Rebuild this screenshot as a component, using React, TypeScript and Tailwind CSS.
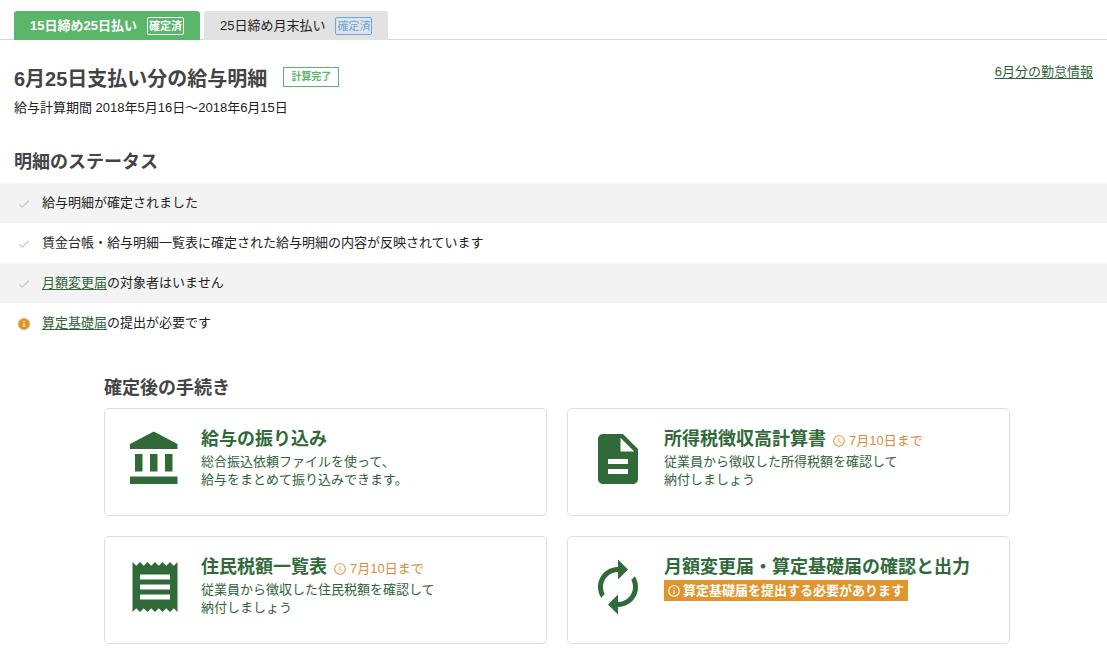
import type { ReactNode } from "react";
import clsx from "clsx";
import { MdCheck, MdInfo } from "react-icons/md";

function Icon({ d, className }: { d: string; className: string }) {
    return (
        <svg viewBox="0 0 24 24" fill="currentColor" aria-hidden="true" className={clsx("shrink-0", className)}>
            <path d={d} />
        </svg>
    );
}

const icons = {
    bank: "M4 10v7h3v-7H4zm6 0v7h3v-7h-3zM2 22h19v-3H2v3zm14-12v7h3v-7h-3zm-4.500-9L2 6v2h19V6l-9.500-5z",
    document:
        "M14 2H6c-1.100 0-1.990.900-1.990 2L4 20c0 1.100.890 2 1.990 2H18c1.100 0 2-.900 2-2V8l-6-6zm2 16H8v-2h8v2zm0-4H8v-2h8v2zm-3-5V3.500L18.500 9H13z",
    receipt:
        "M18 17H6v-2h12v2zm0-4H6v-2h12v2zm0-4H6V7h12v2zM3 22l1.500-1.500L6 22l1.500-1.500L9 22l1.500-1.500L12 22l1.500-1.500L15 22l1.500-1.500L18 22l1.500-1.500L21 22V2l-1.500 1.500L18 2l-1.500 1.500L15 2l-1.500 1.500L12 2l-1.500 1.500L9 2 7.500 3.500 6 2 4.500 3.500 3 2v20z",
    renew: "M12 6v3l4-4-4-4v3c-4.420 0-8 3.580-8 8 0 1.570.460 3.030 1.240 4.260L6.700 14.800c-.450-.830-.700-1.790-.700-2.800 0-3.310 2.690-6 6-6zm6.760 1.740L17.300 9.200c.440.840.700 1.790.700 2.800 0 3.310-2.690 6-6 6v-3l-4 4 4 4v-3c4.420 0 8-3.580 8-8 0-1.570-.460-3.030-1.240-4.260z",
    clock: "M11.990 2C6.470 2 2 6.480 2 12s4.470 10 9.990 10C17.520 22 22 17.520 22 12S17.520 2 11.990 2zM12 20c-4.420 0-8-3.580-8-8s3.580-8 8-8 8 3.580 8 8-3.580 8-8 8zm.500-13H11v6l5.250 3.150.750-1.230-4.500-2.670z",
    info: "M11 17h2v-6h-2v6zm1-15C6.480 2 2 6.480 2 12s4.480 10 10 10 10-4.480 10-10S17.520 2 12 2zm0 18c-4.410 0-8-3.590-8-8s3.590-8 8-8 8 3.590 8 8-3.590 8-8 8zM11 9h2V7h-2v2z",
};

const tabs = [
    { label: "15日締め25日払い", active: true },
    { label: "25日締め月末払い", active: false },
];

function StatusRow({ warning, children }: { warning?: boolean; children: ReactNode }) {
    return (
        <li className="flex min-h-10 items-center gap-[11px] px-[17px] odd:bg-[#f3f3f3]">
            {warning ? (
                <MdInfo className="mt-0.5 size-3.5 shrink-0 text-[#e0962e]" />
            ) : (
                <MdCheck className="mt-0.5 size-3.5 shrink-0 text-[#c4c4c4]" />
            )}
            <p>{children}</p>
        </li>
    );
}

function TextLink({ children }: { children: ReactNode }) {
    return (
        <a href="#" className="text-[#2f6339] underline underline-offset-2">
            {children}
        </a>
    );
}

type CardProps = {
    icon: string;
    title: string;
    due?: string;
    children: ReactNode;
};

function ProcedureCard({ icon, title, due, children }: CardProps) {
    return (
        <a
            href="#"
            className="flex min-h-[108px] gap-4 rounded-[5px] border border-[#dedede] p-5 text-[#2f6339] hover:bg-[#fafafa]"
        >
            <Icon d={icon} className="size-[60px] text-[#306a38]" />
            <div>
                <div className="flex items-center gap-1.5">
                    <h3 className="text-lg leading-5 font-bold text-[#306a38]">{title}</h3>
                    {due && (
                        <span className="flex items-center gap-[3px] pt-1 leading-[14px] text-[#db8b3f]">
                            <Icon d={icons.clock} className="size-3.5 text-[#e0a04a]" />
                            {due}
                        </span>
                    )}
                </div>
                {children}
            </div>
        </a>
    );
}

export default function App() {
    return (
        <div className="bg-white pb-5 font-['Liberation_Sans','Noto_Sans_CJK_JP',sans-serif] text-[13px] leading-[18px] text-[#222]">
            <div role="tablist" className="flex gap-1 border-b border-[#d8d8d8] px-3.5 pt-[11px]">
                {tabs.map((tab) => (
                    <button
                        key={tab.label}
                        type="button"
                        role="tab"
                        aria-selected={tab.active}
                        className={clsx(
                            "-mb-px flex h-[29px] items-center gap-2.5 rounded-t-[3px] px-4",
                            tab.active ? "bg-[#5ab66b] font-bold text-white" : "bg-[#e2e2e2]",
                        )}
                    >
                        {tab.label}
                        <span
                            className={clsx(
                                "rounded-xs border px-px text-[11px] leading-4",
                                tab.active ? "border-white" : "border-[#62aae0] text-[#62aae0]",
                            )}
                        >
                            確定済
                        </span>
                    </button>
                ))}
            </div>

            <header className="flex items-start justify-between px-3.5 pt-[23px]">
                <div className="pt-0.5">
                    <div className="flex items-start gap-4">
                        <h1 className="text-xl leading-7 font-bold text-[#444]">6月25日支払い分の給与明細</h1>
                        <span className="mt-0.5 border border-[#5ab66b] px-[7px] text-[10px] leading-[18px] font-bold text-[#5ab66b]">
                            計算完了
                        </span>
                    </div>
                    <p className="mt-1.5">給与計算期間 2018年5月16日〜2018年6月15日</p>
                </div>
                <TextLink>6月分の勤怠情報</TextLink>
            </header>

            <section className="pt-[33px]">
                <h2 className="px-3.5 text-lg leading-6 font-bold text-[#444]">明細のステータス</h2>
                <ul className="mt-[9px]">
                    <StatusRow>給与明細が確定されました</StatusRow>
                    <StatusRow>賃金台帳・給与明細一覧表に確定された給与明細の内容が反映されています</StatusRow>
                    <StatusRow>
                        <TextLink>月額変更届</TextLink>の対象者はいません
                    </StatusRow>
                    <StatusRow warning>
                        <TextLink>算定基礎届</TextLink>の提出が必要です
                    </StatusRow>
                </ul>
            </section>

            <section className="mx-auto max-w-[913px] pt-[33px] pl-[7px]">
                <h2 className="text-lg leading-6 font-bold text-[#444]">確定後の手続き</h2>
                <div className="mt-2 grid grid-cols-2 gap-5">
                    <ProcedureCard icon={icons.bank} title="給与の振り込み">
                        <p className="mt-1">
                            総合振込依頼ファイルを使って、
                            <br />
                            給与をまとめて振り込みできます。
                        </p>
                    </ProcedureCard>
                    <ProcedureCard icon={icons.document} title="所得税徴収高計算書" due="7月10日まで">
                        <p className="mt-1">
                            従業員から徴収した所得税額を確認して
                            <br />
                            納付しましょう
                        </p>
                    </ProcedureCard>
                    <ProcedureCard icon={icons.receipt} title="住民税額一覧表" due="7月10日まで">
                        <p className="mt-1">
                            従業員から徴収した住民税額を確認して
                            <br />
                            納付しましょう
                        </p>
                    </ProcedureCard>
                    <ProcedureCard icon={icons.renew} title="月額変更届・算定基礎届の確認と出力">
                        <p className="mt-[3px] flex w-fit items-center gap-0.5 bg-[#e0962e] pr-1 pl-[3px] leading-[21px] font-bold text-white">
                            <Icon d={icons.info} className="size-3.5" />
                            算定基礎届を提出する必要があります
                        </p>
                    </ProcedureCard>
                </div>
            </section>
        </div>
    );
}
